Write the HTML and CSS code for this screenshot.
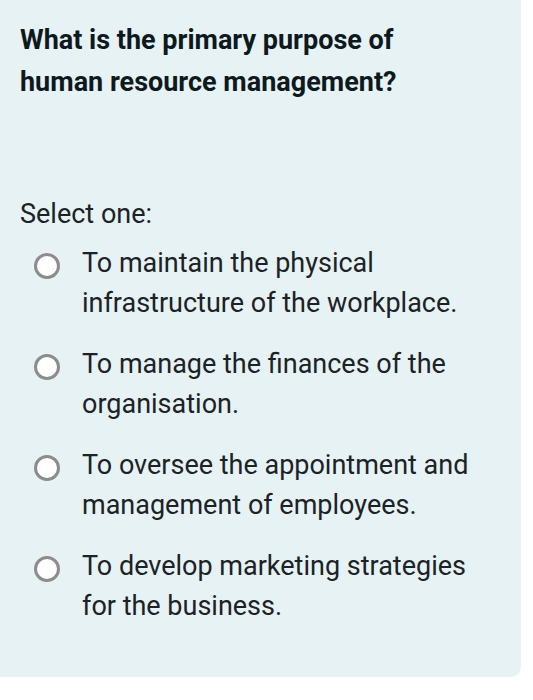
FILE: index.html
```html
<!DOCTYPE html>
<html>
<head>
<meta charset="utf-8">
<link rel="stylesheet" href="styles.css">
</head>
<body>
<div class="panel">
  <h1 class="question">What is the primary purpose of human resource management?</h1>
  <div class="prompt">Select one:</div>
  <div class="options">
    <label class="option"><span class="radio"></span><span class="text">To maintain the physical infrastructure of the workplace.</span></label>
    <label class="option"><span class="radio"></span><span class="text">To manage the finances of the organisation.</span></label>
    <label class="option"><span class="radio"></span><span class="text">To oversee the appointment and management of employees.</span></label>
    <label class="option"><span class="radio"></span><span class="text">To develop marketing strategies for the business.</span></label>
  </div>
</div>
</body>
</html>
```
FILE: styles.css
```css
html, body {
  margin: 0;
  padding: 0;
  background: #ffffff;
}
body {
  font-family: Roboto, "Liberation Sans", sans-serif;
}
.panel {
  width: 521px;
  height: 677px;
  box-sizing: border-box;
  background: #e6f2f4;
  border-bottom-right-radius: 10px;
  padding: 19px 0 0 20px;
}
.question {
  margin: 0;
  font-size: 27px;
  font-weight: 700;
  line-height: 42px;
  color: #0e191e;
  width: 420px;
}
.prompt {
  margin-top: 95px;
  font-size: 27px;
  line-height: 32px;
  color: #1c2226;
}
.options {
  margin-top: 13px;
  display: flex;
  flex-direction: column;
  gap: 21px;
}
.option {
  display: flex;
  align-items: flex-start;
}
.radio {
  flex: none;
  width: 20px;
  height: 20px;
  border: 3px solid #8c8c8c;
  border-radius: 50%;
  background: #ffffff;
  margin: 10px 22px 0 14px;
}
.text {
  font-size: 27px;
  line-height: 40px;
  color: #1c2226;
  width: 420px;
}
```
